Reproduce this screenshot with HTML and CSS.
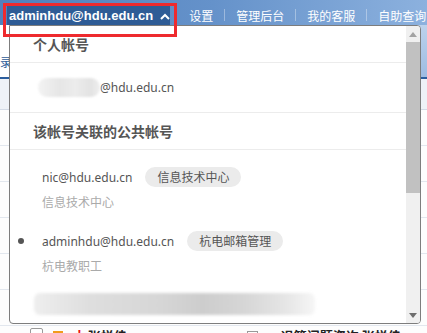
FILE: index.html
```html
<!DOCTYPE html>
<html lang="zh-CN">
<head>
    <meta charset="UTF-8">
    <title>账号切换</title>
    <link rel="stylesheet" href="styles.css">
</head>
<body>
    <div class="topbar">
        <div class="acct">
            <span class="acct-name">adminhdu@hdu.edu.cn</span>
            <svg class="caret" width="10" height="7" viewBox="0 0 10 7"><polyline points="1,6 5,2 9,6" fill="none" stroke="#fff" stroke-width="2"/></svg>
        </div>
        <div class="nav">
            <span class="nav-item">设置</span>
            <span class="nav-sep"></span>
            <span class="nav-item">管理后台</span>
            <span class="nav-sep"></span>
            <span class="nav-item">我的客服</span>
            <span class="nav-sep"></span>
            <span class="nav-item">自助查询</span>
        </div>
    </div>

    <div class="page">
        <div class="toolbar">
            <span class="toolbar-text">录</span>
            <span class="toolbar-btn"></span>
        </div>
        <div class="tabline"></div>
        <div class="list-head"></div>
        <div class="list-row"></div>
        <div class="list-row"></div>
        <div class="list-row"></div>
        <div class="list-row"></div>
        <div class="list-row"></div>
        <div class="list-row"></div>
        <div class="list-row">
            <span class="chk"></span>
            <span class="flag"></span>
            <span class="urgent">!</span>
            <span class="sender">张悦佳</span>
            <span class="mail-ico"></span>
            <span class="subject">退管问题咨询 张悦佳</span>
        </div>
    </div>

    <div class="dropdown">
        <div class="dd-body">
            <div class="dd-title">个人帐号</div>
            <div class="dd-self"><span class="blur-name"></span>@hdu.edu.cn</div>
            <div class="dd-title">该帐号关联的公共帐号</div>
            <ul class="dd-list">
                <li class="acc-item">
                    <div class="acc-line"><span class="acc-mark"></span><span class="acc-mail">nic@hdu.edu.cn</span><span class="acc-tag">信息技术中心</span></div>
                    <div class="acc-sub">信息技术中心</div>
                </li>
                <li class="acc-item">
                    <div class="acc-line"><span class="acc-mark"><i class="dot"></i></span><span class="acc-mail">adminhdu@hdu.edu.cn</span><span class="acc-tag">杭电邮箱管理</span></div>
                    <div class="acc-sub">杭电教职工</div>
                </li>
                <li class="acc-item">
                    <div class="blur-row"></div>
                </li>
            </ul>
        </div>
        <div class="scrollbar">
            <div class="sb-btn"><svg width="8" height="5" viewBox="0 0 8 5"><polygon points="0,5 4,0 8,5" fill="#a3a3a3"/></svg></div>
            <div class="sb-thumb"></div>
            <div class="sb-track"></div>
            <div class="sb-btn"><svg width="8" height="5" viewBox="0 0 8 5"><polygon points="0,0 8,0 4,5" fill="#6e6e6e"/></svg></div>
        </div>
    </div>

    <div class="mark-box"></div>
</body>
</html>
```

FILE: styles.css
```css
body {
    margin: 0;
    width: 427px;
    height: 333px;
    overflow: hidden;
    position: relative;
    background: #fdfdfd;
    font-family: 'Noto Sans', 'Noto Sans CJK SC', sans-serif;
    color: #555;
}
.topbar {
    height: 25px;
    display: flex;
    background: linear-gradient(90deg, #5080bd 0%, #6592ca 50%, #8cb1de 100%);
}
.acct {
    margin: 3px 0 0 7px;
    width: 166px;
    padding: 3px 0 0 2px;
    box-sizing: border-box;
    background: #2e5c96;
    display: flex;
    align-items: flex-start;
}
.acct-name {
    font-family: 'Liberation Sans', 'Noto Sans', sans-serif;
    font-weight: 700;
    font-size: 13px;
    line-height: 19px;
    color: #fff;
}
.caret {
    margin: 7px 0 0 7px;
}
.nav {
    margin-left: 8px;
    display: flex;
    align-items: center;
    padding-top: 5px;
    height: 20px;
}
.nav-item {
    padding: 0 11px;
    font-family: 'Noto Sans CJK SC', sans-serif;
    font-size: 12px;
    color: #fff;
    white-space: nowrap;
}
.nav-sep {
    width: 1px;
    height: 12px;
    background: rgba(255,255,255,0.35);
}

/* page behind the menu */
.page {
    display: flex;
    flex-direction: column;
}
.toolbar {
    height: 52px;
    flex-shrink: 0;
    display: flex;
    justify-content: space-between;
    background: #fff;
}
.toolbar-text {
    margin-top: 28px;
    font-family: 'Noto Sans CJK SC', sans-serif;
    font-size: 12px;
    color: #2d5c99;
}
.toolbar-btn {
    width: 9px;
    background: linear-gradient(#bcd2ec, #9ebce2);
}
.tabline {
    height: 2px;
    flex-shrink: 0;
    background: #2c5e9e;
}
.list-head {
    height: 30px;
    flex-shrink: 0;
    background: #eef2f7;
    border-bottom: 1px solid #d3dbe6;
}
.list-row {
    height: 36px;
    flex-shrink: 0;
    border-bottom: 1px solid #e2e7ee;
    display: flex;
    align-items: flex-start;
    padding-top: 2px;
    box-sizing: border-box;
    font-family: 'Noto Sans CJK SC', sans-serif;
    font-size: 13px;
    color: #222;
}
.chk {
    margin-left: 30px;
    width: 11px;
    height: 11px;
    border: 1px solid #9a9a9a;
    border-radius: 2px;
    background: #fff;
}
.flag {
    margin: 3px 0 0 10px;
    width: 10px;
    height: 4px;
    background: #f29b1c;
}
.urgent {
    margin-left: 14px;
    color: #e11;
    font-weight: 700;
    line-height: 14px;
}
.sender {
    margin-left: 6px;
    line-height: 16px;
    font-weight: 700;
}
.mail-ico {
    margin: 3px 0 0 120px;
    width: 9px;
    height: 7px;
    border: 1px solid #999;
}
.subject {
    margin-left: 23px;
    line-height: 16px;
    font-weight: 700;
    white-space: nowrap;
}

/* account dropdown */
.dropdown {
    position: absolute;
    left: 9px;
    top: 25px;
    width: 412px;
    height: 299px;
    box-sizing: border-box;
    border: 1px solid #7d7d7d;
    border-radius: 0 4px 4px 4px;
    background: #fff;
    display: flex;
    overflow: hidden;
}
.dd-body {
    flex: 1;
    overflow: hidden;
}
.dd-title {
    height: 36px;
    line-height: 36px;
    padding-left: 23px;
    border-bottom: 1px solid #ececec;
    font-family: 'Noto Sans CJK SC', sans-serif;
    font-size: 14px;
    font-weight: 700;
    color: #555;
}
.dd-self {
    height: 49px;
    display: flex;
    align-items: center;
    padding-left: 28px;
    border-bottom: 1px solid #ececec;
    font-size: 12px;
    color: #555;
}
.blur-name {
    width: 62px;
    height: 19px;
    border-radius: 9px;
    background: linear-gradient(90deg, #f3f3f3 0%, #e6e6e6 35%, #ececec 60%, #e3e3e3 85%, #efefef 100%);
    filter: blur(1.2px);
}
.dd-list {
    list-style: none;
    margin: 0;
    padding: 17px 0 0;
}
.acc-item {
    padding-bottom: 19px;
}
.acc-line {
    display: flex;
    align-items: center;
    height: 20px;
    font-size: 12px;
    color: #555;
}
.acc-mark {
    width: 32px;
    display: flex;
    align-items: center;
}
.dot {
    margin-left: 8px;
    width: 6px;
    height: 6px;
    border-radius: 50%;
    background: #555;
}
.acc-tag {
    margin-left: 13px;
    height: 20px;
    line-height: 20px;
    padding: 0 12px;
    border-radius: 10px;
    background: #ebebeb;
    font-family: 'Noto Sans CJK SC', sans-serif;
    font-size: 12px;
    color: #555;
}
.acc-sub {
    margin-top: 5px;
    padding-left: 32px;
    height: 20px;
    line-height: 20px;
    font-family: 'Noto Sans CJK SC', sans-serif;
    font-size: 12px;
    color: #aaa;
}
.blur-row {
    margin: -2px 0 0 24px;
    width: 281px;
    height: 22px;
    border-radius: 6px;
    background: linear-gradient(90deg, #eeeeee 0%, #dedede 20%, #d6d6d6 45%, #cdcdcd 60%, #d6d6d6 75%, #e6e6e6 90%, #f6f6f6 100%);
    filter: blur(1.5px);
}
.scrollbar {
    width: 14px;
    background: #f0f0f0;
    display: flex;
    flex-direction: column;
}
.sb-btn {
    height: 16px;
    display: flex;
    align-items: center;
    justify-content: center;
}
.sb-thumb {
    height: 151px;
    background: #c1c1c1;
}
.sb-track {
    flex: 1;
}

/* red annotation frame */
.mark-box {
    position: absolute;
    left: 3px;
    top: 3px;
    width: 174px;
    height: 34px;
    box-sizing: border-box;
    border: 3px solid #ee2a2e;
}
```
